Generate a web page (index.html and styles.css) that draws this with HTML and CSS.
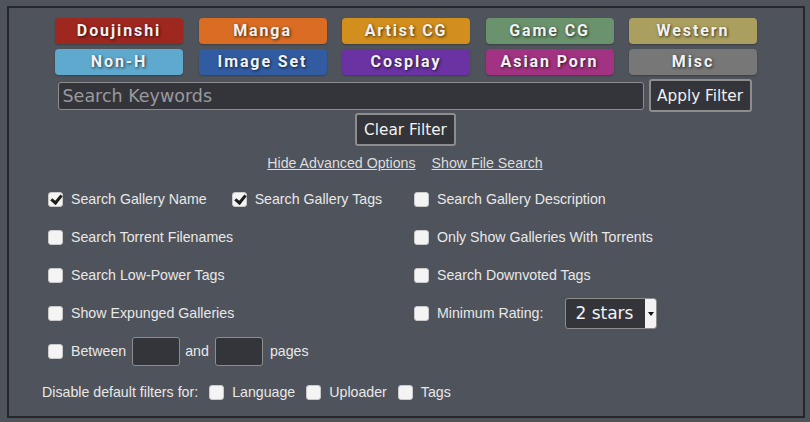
FILE: index.html
```html
<!DOCTYPE html>
<html>
<head>
<meta charset="utf-8">
<link rel="stylesheet" href="styles.css">
</head>
<body>
<div class="box">
  <div class="cats">
    <div class="cat c1">Doujinshi</div>
    <div class="cat c2">Manga</div>
    <div class="cat c3">Artist CG</div>
    <div class="cat c4">Game CG</div>
    <div class="cat c5">Western</div>
    <div class="cat c6">Non-H</div>
    <div class="cat c7">Image Set</div>
    <div class="cat c8">Cosplay</div>
    <div class="cat c9">Asian Porn</div>
    <div class="cat c10">Misc</div>
  </div>
  <div class="search">
    <input class="kw" type="text" placeholder="Search Keywords">
    <button class="btn">Apply Filter</button>
  </div>
  <div class="clear"><button class="btn">Clear Filter</button></div>
  <div class="links"><a href="#">Hide Advanced Options</a><a href="#">Show File Search</a></div>
  <div class="opts">
    <div class="row">
      <div class="left">
        <span class="cb on"></span><span class="lbl">Search Gallery Name</span>
        <span class="cb on gap"></span><span class="lbl">Search Gallery Tags</span>
      </div>
      <div class="right"><span class="cb"></span><span class="lbl">Search Gallery Description</span></div>
    </div>
    <div class="row">
      <div class="left"><span class="cb"></span><span class="lbl">Search Torrent Filenames</span></div>
      <div class="right"><span class="cb"></span><span class="lbl">Only Show Galleries With Torrents</span></div>
    </div>
    <div class="row">
      <div class="left"><span class="cb"></span><span class="lbl">Search Low-Power Tags</span></div>
      <div class="right"><span class="cb"></span><span class="lbl">Search Downvoted Tags</span></div>
    </div>
    <div class="row">
      <div class="left"><span class="cb"></span><span class="lbl">Show Expunged Galleries</span></div>
      <div class="right"><span class="cb"></span><span class="lbl">Minimum Rating:</span>
        <div class="sel"><span class="selv">2 stars</span><span class="arr"></span></div>
      </div>
    </div>
    <div class="row">
      <div class="left"><span class="cb"></span><span class="lbl">Between</span><span class="num"></span><span class="lbl">and</span><span class="num"></span><span class="lbl pages">pages</span></div>
    </div>
  </div>
  <div class="dis">
    <span class="lbl">Disable default filters for:</span>
    <span class="cb d1"></span><span class="lbl">Language</span>
    <span class="cb d2"></span><span class="lbl">Uploader</span>
    <span class="cb d2"></span><span class="lbl">Tags</span>
  </div>
</div>
</body>
</html>
```
FILE: styles.css
```css
html, body { margin: 0; padding: 0; }
body {
  background: #4f535b;
  color: #f1f1f1;
  font-family: "Liberation Sans", Arial, sans-serif;
  font-size: 14.2px;
  width: 810px;
  height: 422px;
  overflow: hidden;
}
.box {
  margin: 6px 0 0 7px;
  width: 794px;
  height: 408px;
  border: 2px solid #25272b;
  box-sizing: content-box;
  position: relative;
}
.cats {
  display: grid;
  grid-template-columns: repeat(5, 128px);
  grid-auto-rows: 26px;
  column-gap: 15.5px;
  row-gap: 5px;
  justify-content: center;
  margin-top: 10px;
}
.cat {
  border-radius: 4px;
  color: #f1f1f1;
  font-family: Roboto, "Liberation Sans", sans-serif;
  font-weight: bold;
  font-size: 16px;
  letter-spacing: 1.9px;
  text-align: center;
  line-height: 26px;
  text-shadow: 1px 1px 3px rgba(0,0,0,0.7);
  box-shadow: 0 1px 2px rgba(0,0,0,0.25);
}
.c1 { background: #9e2720; }
.c2 { background: #db6c24; }
.c3 { background: #d38f1d; }
.c4 { background: #6a936d; }
.c5 { background: #ab9f60; }
.c6 { background: #5fa9cf; }
.c7 { background: #325ca2; }
.c8 { background: #6a32a2; }
.c9 { background: #a23282; }
.c10 { background: #777777; }
.search {
  display: flex;
  justify-content: center;
  align-items: center;
  gap: 5px;
  margin-top: 4px;
  margin-left: -3px;
}
.kw {
  width: 586px;
  height: 28px;
  box-sizing: border-box;
  background: #34353b;
  border: 1px solid #8d8d8d;
  border-radius: 3px;
  color: #f1f1f1;
  font-family: "DejaVu Sans", sans-serif;
  font-size: 17.5px;
  padding: 0 4px;
  outline: none;
}
.kw::placeholder { color: #9a9a9e; }
.btn {
  height: 33px;
  box-sizing: border-box;
  background: #34353b;
  border: 2px solid #8d8d8d;
  border-radius: 3px;
  color: #f1f1f1;
  font-family: "DejaVu Sans", sans-serif;
  font-size: 15.3px;
  padding: 0 5px;
  margin: 0;
}
.search .btn { width: 103px; }
.clear {
  display: flex;
  justify-content: center;
  margin-top: 1px;
  margin-left: -1px;
}
.clear .btn { width: 101px; }
.links {
  display: flex;
  justify-content: center;
  gap: 16px;
  margin-top: 8px;
  height: 18px;
  line-height: 18px;
  margin-left: -2px;
}
.links a { color: #dddddd; text-decoration: underline; }
.opts { margin-top: 8px; margin-left: 39px; }
.row {
  display: flex;
  height: 38px;
  align-items: center;
}
.left { width: 366px; display: flex; align-items: center; }
.right { display: flex; align-items: center; }
.cb {
  display: inline-block;
  width: 15px;
  height: 15px;
  box-sizing: border-box;
  background: #f4f4f4;
  border: 1px solid #c9c9c9;
  border-radius: 3px;
  margin-right: 8px;
  position: relative;
  flex: none;
}
.cb.on::after {
  content: "";
  position: absolute;
  left: 4px;
  top: 0px;
  width: 4px;
  height: 8px;
  border: solid #1e1e1e;
  border-width: 0 3px 3px 0;
  transform: rotate(40deg);
}
.cb.gap { margin-left: 25px; }
.lbl { color: #e8e8e8; white-space: nowrap; }
.sel {
  margin-left: 22px;
  width: 92px;
  height: 31px;
  box-sizing: border-box;
  border: 1px solid #8d8d8d;
  border-radius: 3px;
  background: #34353b;
  display: flex;
  align-items: center;
  overflow: hidden;
}
.selv {
  flex: 1;
  font-family: "DejaVu Sans", sans-serif;
  font-size: 17px;
  color: #f1f1f1;
  padding-left: 9px;
}
.arr {
  width: 11px;
  height: 100%;
  background: #f3f3f3;
  position: relative;
}
.arr::after {
  content: "";
  position: absolute;
  left: 3px;
  top: 13px;
  border-left: 3px solid transparent;
  border-right: 3px solid transparent;
  border-top: 4px solid #111;
}
.num {
  display: inline-block;
  width: 48px;
  height: 29px;
  box-sizing: border-box;
  background: #34353b;
  border: 1px solid #8d8d8d;
  border-radius: 3px;
  margin-left: 6px;
  margin-right: 5px;
}
.pages { margin-left: 2px; }
.dis {
  display: flex;
  align-items: center;
  margin-left: 33px;
  margin-top: 3px;
  height: 38px;
}
.dis .cb.d1 { margin-left: 11px; }
.dis .cb.d2 { margin-left: 11px; }
```
